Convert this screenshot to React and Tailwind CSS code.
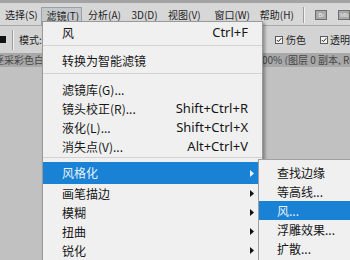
import React from "react";

const Arrow = ({ light }) => (
  <svg width="4" height="7" viewBox="0 0 4 7" className="shrink-0">
    <path d="M0 0L4 3.5L0 7Z" fill={light ? "#e8f2fc" : "#111"} />
  </svg>
);

const Check = () => (
  <div className="w-[8px] h-[8px] border border-[#5a5a5a] bg-[#f4f4f4] flex items-center justify-center shrink-0">
    <svg width="6" height="6" viewBox="0 0 6 6">
      <path d="M0.8 3L2.4 4.6L5.3 1.2" stroke="#222" strokeWidth="1" fill="none" />
    </svg>
  </div>
);

const Sep = ({ pt, pb }) => (
  <div className={`${pt} ${pb}`}>
    <div className="h-px bg-[#d2d2d2]" />
  </div>
);

function MenuRow({ label, shortcut, arrow, active, h = "h-[19px]" }) {
  return (
    <div
      className={`${h} flex items-center pl-[19px] ${arrow ? "pr-[8px]" : "pr-[14px]"} ${
        active ? "bg-[#1a82d4] text-[#e6f1fb]" : "text-[#161616]"
      }`}
    >
      <span className="text-[12px] leading-none whitespace-nowrap">{label}</span>
      <span className="flex-1" />
      {shortcut && (
        <span className="font-['Noto_Sans',sans-serif] text-[13px] leading-none whitespace-nowrap">
          {shortcut}
        </span>
      )}
      {arrow && <Arrow light={active} />}
    </div>
  );
}

function SubRow({ label, active }) {
  return (
    <div
      className={`h-[19px] flex items-center pl-[18px] ${
        active ? "bg-[#1a82d4] text-[#e6f1fb]" : "text-[#161616]"
      }`}
    >
      <span className="text-[12px] leading-none whitespace-nowrap">{label}</span>
    </div>
  );
}

export default function App() {
  return (
    <div className="relative w-[350px] h-[260px] overflow-hidden bg-[#c1c1c1] font-['Noto_Sans_CJK_SC',sans-serif]">
      {/* top strip */}
      <div className="h-[3px] bg-[#a3a3a3]" />
      {/* menubar */}
      <div className="h-[23px] pt-[4px] border-b border-[#a9a9a9] bg-[#d7d7d7] flex items-start text-[10px] text-[#1e1e1e] leading-none">
        <div className="w-[42px] h-[16px] flex items-center pl-[5px]">选择(S)</div>
        <div className="w-[41px] h-[18px] flex items-start pt-[3px] pl-[4px] bg-[#c5c8cb] border border-[#9ba0a5]">
          滤镜(T)
        </div>
        <div className="w-[45px] h-[16px] flex items-center pl-[6px]">分析(A)</div>
        <div className="w-[37px] h-[16px] flex items-center pl-[5px]">3D(D)</div>
        <div className="w-[47px] h-[16px] flex items-center pl-[5px]">视图(V)</div>
        <div className="w-[46px] h-[16px] flex items-center pl-[5px]">窗口(W)</div>
        <div className="w-[44px] h-[16px] flex items-center pl-[5px]">帮助(H)</div>
        <div className="ml-[5px] w-[2px] h-[16px] border-l border-[#9d9d9d] border-r border-r-[#f2f2f2]" />
        <div className="ml-[10px] mt-[3px] w-[12px] h-[10px] border border-[#6e6e6e] bg-[#a9a9a9] flex items-center justify-center text-[6px] text-[#e8e8e8] font-['Liberation_Sans',sans-serif]">
          Br
        </div>
        <div className="ml-[11px] mt-[3px] w-[12px] h-[10px] border border-[#6e6e6e] bg-[#a9a9a9] flex items-center justify-center text-[6px] text-[#e8e8e8] font-['Liberation_Sans',sans-serif]">
          Mb
        </div>
      </div>
      {/* options bar */}
      <div className="h-[27px] bg-[#d3d3d3] flex items-center text-[10px] text-[#1e1e1e] leading-none">
        <div className="w-[6px] h-[7px] bg-[#111]" />
        <div className="ml-[6px] w-[2px] h-[20px] border-l border-[#9d9d9d] border-r border-r-[#f2f2f2]" />
        <div className="ml-[5px]">模式:</div>
        <div className="flex-1" />
        <div className="w-[92px] flex items-center">
          <div className="w-[8px] h-[8px] border border-[#5a5a5a] bg-[#f4f4f4]" />
          <div className="ml-[15px]">
            <Check />
          </div>
          <span className="ml-[3px] whitespace-nowrap">伤色</span>
          <div className="ml-[14px]">
            <Check />
          </div>
          <span className="ml-[2px] whitespace-nowrap">透明</span>
        </div>
      </div>
      {/* document tab bar */}
      <div className="h-[14px] bg-[#a8a8a8] flex items-center text-[10px] text-[#464646] leading-none overflow-hidden">
        <span className="ml-[-6px] whitespace-nowrap">逐采彩色白</span>
        <div className="flex-1" />
        <span className="w-[88px] whitespace-nowrap overflow-hidden">00% (图层 0 副本, RGB/8)</span>
      </div>

      {/* main dropdown menu */}
      <div className="absolute left-[42px] top-[21px] w-[221px] h-[250px] bg-[#f0f0f0] border border-[#9a9a9a] shadow-[2px_2px_3px_rgba(0,0,0,0.35)]">
        <MenuRow label="风" shortcut="Ctrl+F" h="h-[21px]" />
        <Sep pt="pt-[2px]" pb="pb-[5px]" />
        <MenuRow label="转换为智能滤镜" h="h-[20px]" />
        <Sep pt="pt-[2px]" pb="pb-[6px]" />
        <MenuRow label="滤镜库(G)..." />
        <MenuRow label="镜头校正(R)..." shortcut="Shift+Ctrl+R" />
        <MenuRow label="液化(L)..." shortcut="Shift+Ctrl+X" />
        <MenuRow label="消失点(V)..." shortcut="Alt+Ctrl+V" />
        <Sep pt="pt-[1px]" pb="pb-[4px]" />
        <MenuRow label="风格化" arrow active h="h-[22px]" />
        <MenuRow label="画笔描边" arrow />
        <MenuRow label="模糊" arrow />
        <MenuRow label="扭曲" arrow />
        <MenuRow label="锐化" arrow />
      </div>

      {/* submenu */}
      <div className="absolute left-[258px] top-[159px] w-[100px] h-[110px] bg-[#f0f0f0] border-l border-t border-[#a0a0a0] pt-[3px]">
        <SubRow label="查找边缘" />
        <SubRow label="等高线..." />
        <SubRow label="风..." active />
        <SubRow label="浮雕效果..." />
        <SubRow label="扩散..." />
      </div>
    </div>
  );
}
